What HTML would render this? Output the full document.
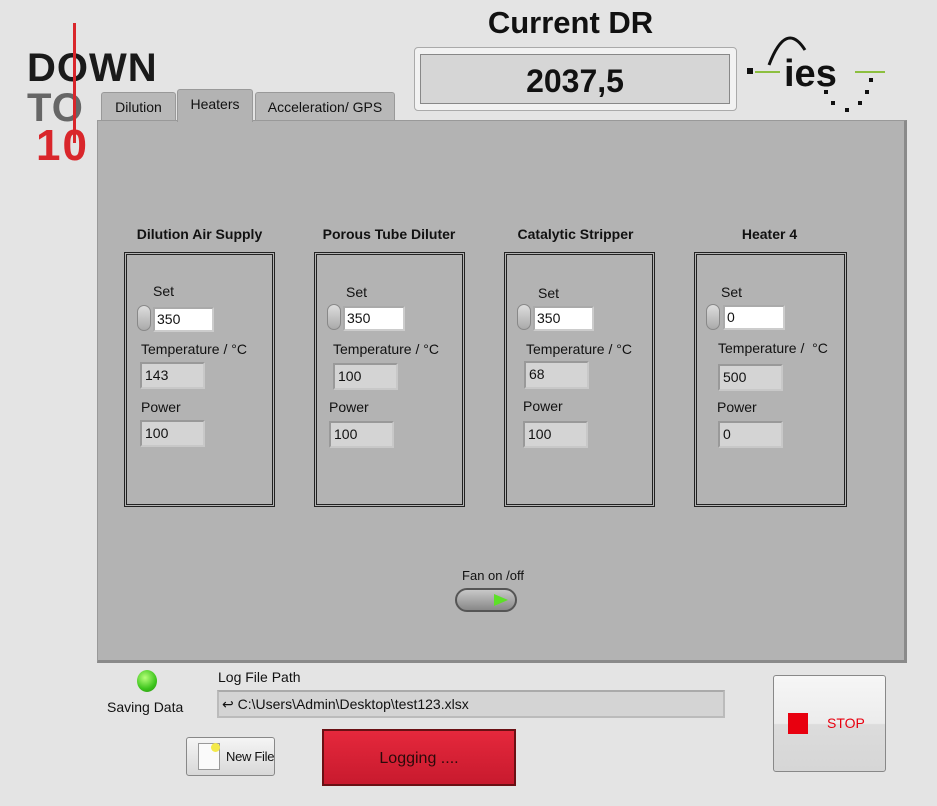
<!DOCTYPE html>
<html><head><style>
*{margin:0;padding:0;box-sizing:border-box}
html,body{width:937px;height:806px}
body{background:#e4e4e4;font-family:"Liberation Sans",sans-serif;position:relative;overflow:hidden;color:#111}
.a{position:absolute;white-space:nowrap}
.t{font-size:14px}
.box{position:absolute;border:3px double #222;top:252px;width:151px;height:255px}
.h{position:absolute;top:226px;font-size:14px;font-weight:bold;text-align:center}
.in{position:absolute;background:#fff;border:2px solid #aaa;border-right-color:#ccc;border-bottom-color:#ccc;font-size:14px;padding:2px 2px;height:25px}
.ind{position:absolute;background:#d4d4d4;border:2px solid #999;border-right-color:#c8c8c8;border-bottom-color:#c8c8c8;font-size:14px;padding:3px 3px;height:27px;width:65px}
.sp{position:absolute;width:14px;height:26px;border-radius:7px;background:linear-gradient(#ddd,#aaa);border:1px solid #888}
.tab{position:absolute;border:1px solid #999;border-bottom:none;background:#b8b8b8;font-size:14px;text-align:center;border-radius:3px 3px 0 0}
</style></head><body>
<div class="a" style="left:27px;top:50px;font-size:40px;font-weight:bold;line-height:36px;letter-spacing:1px;color:#1a1a1a">DOWN</div>
<div class="a" style="left:27px;top:90px;font-size:40px;font-weight:bold;line-height:36px;letter-spacing:1px;color:#666">TO</div>
<div class="a" style="left:36px;top:126px;font-size:44px;font-weight:bold;line-height:40px;letter-spacing:2px;color:#d9262b">10</div>
<div class="a" style="left:73px;top:23px;width:3px;height:120px;background:#d9262b"></div>
<div class="a" style="left:404px;top:5px;width:333px;text-align:center;font-size:31px;font-weight:bold">Current DR</div>
<div class="a" style="left:414px;top:47px;width:323px;height:64px;background:#f2f2f2;border:1px solid #aaa;border-radius:4px"></div>
<div class="a" style="left:420px;top:54px;width:310px;height:50px;background:#d6d6d6;border:1px solid #888;text-align:center;font-size:32px;font-weight:bold;line-height:52px">2037,5</div>
<svg class="a" style="left:740px;top:20px" width="160" height="100">
<rect x="7" y="48" width="6" height="6" fill="#111"/>
<line x1="15" y1="52" x2="40" y2="52" stroke="#8cbf3f" stroke-width="2"/>
<line x1="115" y1="52" x2="145" y2="52" stroke="#8cbf3f" stroke-width="2"/>
<path d="M29 45 Q46 0 65 30" fill="none" stroke="#111" stroke-width="3"/>
<text x="44" y="66" font-family="Liberation Sans" font-weight="bold" font-size="38" fill="#111">ies</text>
<rect x="129" y="58" width="4" height="4" fill="#111"/><rect x="125" y="70" width="4" height="4" fill="#111"/><rect x="84" y="70" width="4" height="4" fill="#111"/><rect x="91" y="81" width="4" height="4" fill="#111"/><rect x="105" y="88" width="4" height="4" fill="#111"/><rect x="118" y="81" width="4" height="4" fill="#111"/>
</svg>
<div class="tab" style="left:101px;top:92px;width:75px;height:30px;line-height:28px">Dilution</div>
<div class="tab" style="left:255px;top:92px;width:140px;height:30px;line-height:28px">Acceleration/ GPS</div>
<div class="a" style="left:97px;top:120px;width:810px;height:543px;background:#b3b3b3;border:1px solid #999;border-right:3px solid #8a8a8a;border-bottom:3px solid #8a8a8a"></div>
<div class="tab" style="left:177px;top:89px;width:76px;height:33px;line-height:28px;background:#b3b3b3;z-index:2">Heaters</div>

<div class="h" style="left:124px;width:151px">Dilution Air Supply</div>
<div class="h" style="left:309px;width:160px">Porous Tube Diluter</div>
<div class="h" style="left:500px;width:151px">Catalytic Stripper</div>
<div class="h" style="left:694px;width:151px">Heater 4</div>
<div class="box" style="left:124px"></div>
<div class="box" style="left:314px"></div>
<div class="box" style="left:504px"></div>
<div class="box" style="left:694px;width:153px"></div>

<div class="a t" style="left:153px;top:283px">Set</div><div class="sp" style="left:137px;top:305px"></div><div class="in" style="left:153px;top:307px;width:61px">350</div>
<div class="a t" style="left:141px;top:341px">Temperature / °C</div><div class="ind" style="left:140px;top:362px">143</div>
<div class="a t" style="left:141px;top:399px">Power</div><div class="ind" style="left:140px;top:420px">100</div>

<div class="a t" style="left:346px;top:284px">Set</div><div class="sp" style="left:327px;top:304px"></div><div class="in" style="left:343px;top:306px;width:62px">350</div>
<div class="a t" style="left:333px;top:341px">Temperature / °C</div><div class="ind" style="left:333px;top:363px">100</div>
<div class="a t" style="left:329px;top:399px">Power</div><div class="ind" style="left:329px;top:421px">100</div>

<div class="a t" style="left:538px;top:285px">Set</div><div class="sp" style="left:517px;top:304px"></div><div class="in" style="left:533px;top:306px;width:61px">350</div>
<div class="a t" style="left:526px;top:341px">Temperature / °C</div><div class="ind" style="left:524px;top:361px;height:28px">68</div>
<div class="a t" style="left:523px;top:398px">Power</div><div class="ind" style="left:523px;top:421px">100</div>

<div class="a t" style="left:721px;top:284px">Set</div><div class="sp" style="left:706px;top:304px"></div><div class="in" style="left:723px;top:305px;width:62px">0</div>
<div class="a t" style="left:718px;top:340px">Temperature /&nbsp; °C</div><div class="ind" style="left:718px;top:364px">500</div>
<div class="a t" style="left:717px;top:399px">Power</div><div class="ind" style="left:718px;top:421px">0</div>

<div class="a t" style="left:443px;top:568px;width:100px;text-align:center;font-size:13px">Fan on /off</div>
<div class="a" style="left:455px;top:588px;width:62px;height:24px;border-radius:12px;background:linear-gradient(#c8c8c8,#888);border:2px solid #555"></div>
<svg class="a" style="left:492px;top:592px" width="20" height="16"><polygon points="2,2 16,8 2,14" fill="#5de028"/></svg>

<div class="a" style="left:137px;top:670px;width:20px;height:22px;border-radius:50%;background:radial-gradient(circle at 40% 35%,#b6ff7a,#3cc41c 60%,#2a8a10)"></div>
<div class="a t" style="left:107px;top:699px">Saving Data</div>
<div class="a t" style="left:218px;top:669px">Log File Path</div>
<div class="a" style="left:217px;top:690px;width:508px;height:28px;background:#d4d4d4;border:2px solid #bbb;border-top-color:#aaa;font-size:14px;padding:4px 3px">&#8617; C:\Users\Admin\Desktop\test123.xlsx</div>
<div class="a" style="left:186px;top:737px;width:89px;height:39px;border:1px solid #888;border-radius:3px;background:linear-gradient(#f5f5f5,#d8d8d8);font-size:13px;line-height:38px;padding-left:39px;letter-spacing:-0.3px">New File</div>
<div class="a" style="left:198px;top:743px;width:22px;height:27px;background:#fafafa;border:1px solid #999"></div>
<div class="a" style="left:211px;top:743px;width:9px;height:9px;border-radius:50%;background:#f3e94a"></div>
<div class="a" style="left:322px;top:729px;width:194px;height:57px;background:linear-gradient(#e5283c,#c81a2e);border:2px solid #6a1014;text-align:center;line-height:56px;font-size:16px;color:#2a0a0a">Logging ....</div>
<div class="a" style="left:773px;top:675px;width:113px;height:97px;border:1px solid #888;border-radius:3px;background:linear-gradient(#f6f6f6 0%,#ececec 50%,#dcdcdc 51%,#d6d6d6)"></div>
<div class="a" style="left:788px;top:713px;width:20px;height:21px;background:#e8000f"></div>
<div class="a" style="left:827px;top:715px;font-size:14px;color:#e8000f">STOP</div>
</body></html>
